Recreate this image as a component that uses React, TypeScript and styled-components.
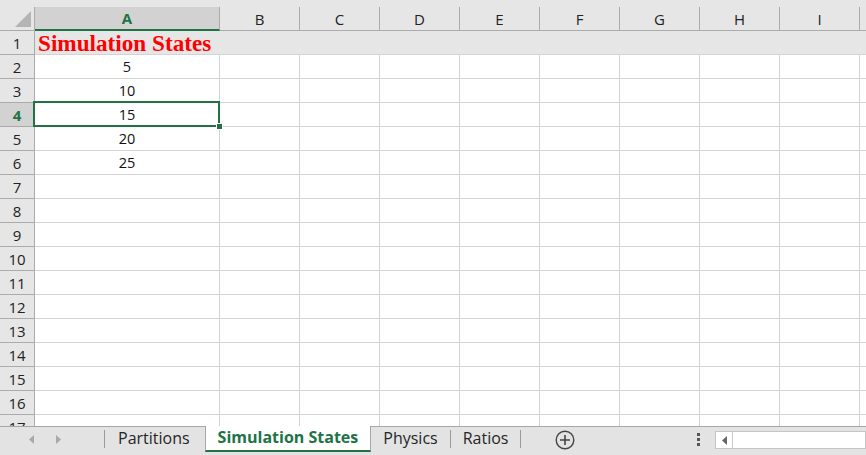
import React from 'react'
import styled, { createGlobalStyle, css } from 'styled-components'

const GREEN = '#217346'
const GRID_LINE = '#d4d4d4'
const HEAD_LINE = '#ababab'
const HEAD_BG = '#e6e6e6'

const GlobalStyle = createGlobalStyle`
  html, body {
    margin: 0;
    padding: 0;
    overflow: hidden;
    background: #fff;
  }
  body {
    font-family: 'Open Sans', 'Noto Sans', sans-serif;
  }
`

const Frame = styled.div`
  width: 866px;
  height: 455px;
  display: flex;
  flex-direction: column;
  overflow: hidden;
  background: #fff;
`

const TopStrip = styled.div`
  height: 7px;
  flex: none;
  background: ${HEAD_BG};
`

const Sheet = styled.div`
  flex: 1;
  min-height: 0;
  display: grid;
  grid-template-columns: 35px 185px repeat(9, 80px);
  grid-auto-rows: 24px;
  align-content: start;
  overflow: hidden;
`

const headBase = css`
  box-sizing: border-box;
  background: ${HEAD_BG};
  border-right: 1px solid ${HEAD_LINE};
  border-bottom: 1px solid ${HEAD_LINE};
  display: flex;
  align-items: center;
  justify-content: center;
  font-size: 15px;
  color: #222;
`

const Corner = styled.div`
  ${headBase};
  position: relative;
  &::after {
    content: '';
    position: absolute;
    right: 3px;
    bottom: 3px;
    width: 0;
    height: 0;
    border-left: 16px solid transparent;
    border-bottom: 16px solid #b4b4b4;
  }
`

const ColHeader = styled.div<{ $active?: boolean }>`
  ${headBase};
  ${(p) =>
    p.$active &&
    css`
      background: #d2d2d2;
      color: ${GREEN};
      font-weight: 700;
      border-bottom: 2px solid ${GREEN};
    `}
`

const RowHeader = styled.div<{ $active?: boolean }>`
  ${headBase};
  ${(p) =>
    p.$active &&
    css`
      background: #d2d2d2;
      color: ${GREEN};
      font-weight: 700;
    `}
`

const Cell = styled.div<{ $filled?: boolean; $selected?: boolean }>`
  box-sizing: border-box;
  border-right: 1px solid ${(p) => (p.$filled ? '#e7e6e6' : GRID_LINE)};
  border-bottom: 1px solid ${GRID_LINE};
  background: ${(p) => (p.$filled ? '#e7e6e6' : '#fff')};
  display: flex;
  align-items: center;
  justify-content: center;
  font-size: 14.5px;
  color: #111;
  white-space: nowrap;
  ${(p) =>
    p.$selected &&
    css`
      position: relative;
      z-index: 2;
      &::before {
        content: '';
        position: absolute;
        left: -2px;
        top: -2px;
        right: -1px;
        bottom: -1px;
        border: 2px solid ${GREEN};
      }
      &::after {
        content: '';
        position: absolute;
        right: -4px;
        bottom: -4px;
        width: 5px;
        height: 5px;
        background: ${GREEN};
        border: 1px solid #fff;
      }
    `}
`

const TitleCell = styled(Cell)`
  justify-content: flex-start;
  padding-left: 3px;
  overflow: visible;
  position: relative;
  z-index: 2;
`

const Title = styled.span`
  font-family: 'Liberation Serif', 'Times New Roman', serif;
  font-weight: 700;
  font-size: 23.2px;
  color: #ff0000;
  line-height: 1;
  padding-top: 2px;
`

const TabBar = styled.div`
  height: 29px;
  flex: none;
  box-sizing: border-box;
  border-top: 1px solid #a6a6a6;
  background: #e3e3e3;
  display: flex;
  align-items: flex-start;
`

const NavArea = styled.div`
  width: 104px;
  height: 24px;
  display: flex;
  align-items: center;
  padding-left: 28px;
  gap: 22px;
  box-sizing: border-box;
`

const Divider = styled.div`
  width: 1px;
  height: 18px;
  margin-top: 3px;
  background: #9a9a9a;
  flex: none;
`

const Tab = styled.div<{ $active?: boolean }>`
  height: 22px;
  padding: 0 12px;
  display: flex;
  align-items: center;
  font-size: 16px;
  color: #262626;
  white-space: nowrap;
  ${(p) =>
    p.$active &&
    css`
      margin-top: -1px;
      height: 26px;
      box-sizing: border-box;
      background: #fff;
      color: ${GREEN};
      font-weight: 700;
      border-left: 1px solid #a6a6a6;
      border-right: 1px solid #a6a6a6;
      border-bottom: 2px solid ${GREEN};
      padding-bottom: 2px;
    `}
`

const FirstTab = styled(Tab)`
  padding: 0 15px 0 13px;
`

const AddButton = styled.div`
  width: 22px;
  height: 24px;
  margin-left: 33px;
  display: flex;
  align-items: center;
  justify-content: center;
  padding-top: 1px;
`

const Spacer = styled.div`
  flex: 1;
`

const Dots = styled.div`
  width: 6px;
  height: 24px;
  margin-right: 14px;
  display: flex;
  align-items: center;
  justify-content: center;
`

const ScrollBox = styled.div`
  width: 151px;
  height: 18px;
  margin-top: 4px;
  display: flex;
  flex: none;
`

const ScrollButton = styled.div`
  width: 18px;
  box-sizing: border-box;
  border: 1px solid #c6c6c6;
  background: #fff;
  display: flex;
  align-items: center;
  justify-content: center;
`

const ScrollTrack = styled.div`
  flex: 1;
  box-sizing: border-box;
  border: 1px solid #c6c6c6;
  border-left: none;
  background: #fff;
`

const COLS = ['A', 'B', 'C', 'D', 'E', 'F', 'G', 'H', 'I', 'J']
const ROWS = Array.from({ length: 17 }, (_, i) => i + 1)
const VALUES: Record<number, string> = { 2: '5', 3: '10', 4: '15', 5: '20', 6: '25' }
const SELECTED_ROW = 4

const Arrow = ({ dir }: { dir: 'left' | 'right' }) => (
  <svg width="6" height="9" viewBox="0 0 6 9">
    <path d={dir === 'left' ? 'M6 0 L1 4.5 L6 9 Z' : 'M0 0 L5 4.5 L0 9 Z'} fill="#a9a9a9" />
  </svg>
)

const App = (): React.ReactElement => {
  return (
    <>
      <GlobalStyle />
      <Frame>
        <TopStrip />
        <Sheet>
          <Corner />
          {COLS.map((c) => (
            <ColHeader key={c} $active={c === 'A'}>
              {c}
            </ColHeader>
          ))}
          {ROWS.map((r) => (
            <React.Fragment key={r}>
              <RowHeader $active={r === SELECTED_ROW}>{r}</RowHeader>
              {COLS.map((c) => {
                if (r === 1 && c === 'A') {
                  return (
                    <TitleCell key={c} $filled>
                      <Title>Simulation States</Title>
                    </TitleCell>
                  )
                }
                return (
                  <Cell key={c} $filled={r === 1} $selected={r === SELECTED_ROW && c === 'A'}>
                    {c === 'A' ? VALUES[r] : null}
                  </Cell>
                )
              })}
            </React.Fragment>
          ))}
        </Sheet>
        <TabBar>
          <NavArea>
            <Arrow dir="left" />
            <Arrow dir="right" />
          </NavArea>
          <Divider />
          <FirstTab>Partitions</FirstTab>
          <Tab $active>Simulation States</Tab>
          <Tab>Physics</Tab>
          <Divider />
          <Tab>Ratios</Tab>
          <Divider />
          <AddButton>
            <svg width="20" height="20" viewBox="0 0 20 20">
              <circle cx="10" cy="10" r="8.8" fill="none" stroke="#444" strokeWidth="1.4" />
              <path d="M10 5 V15 M5 10 H15" stroke="#444" strokeWidth="1.6" />
            </svg>
          </AddButton>
          <Spacer />
          <Dots>
            <svg width="3" height="13" viewBox="0 0 3 13">
              <rect x="0" y="0" width="3" height="3" fill="#555" />
              <rect x="0" y="5" width="3" height="3" fill="#555" />
              <rect x="0" y="10" width="3" height="3" fill="#555" />
            </svg>
          </Dots>
          <ScrollBox>
            <ScrollButton>
              <svg width="5" height="9" viewBox="0 0 5 9">
                <path d="M5 0 L0 4.5 L5 9 Z" fill="#666" />
              </svg>
            </ScrollButton>
            <ScrollTrack />
          </ScrollBox>
        </TabBar>
      </Frame>
    </>
  )
}

export default App
